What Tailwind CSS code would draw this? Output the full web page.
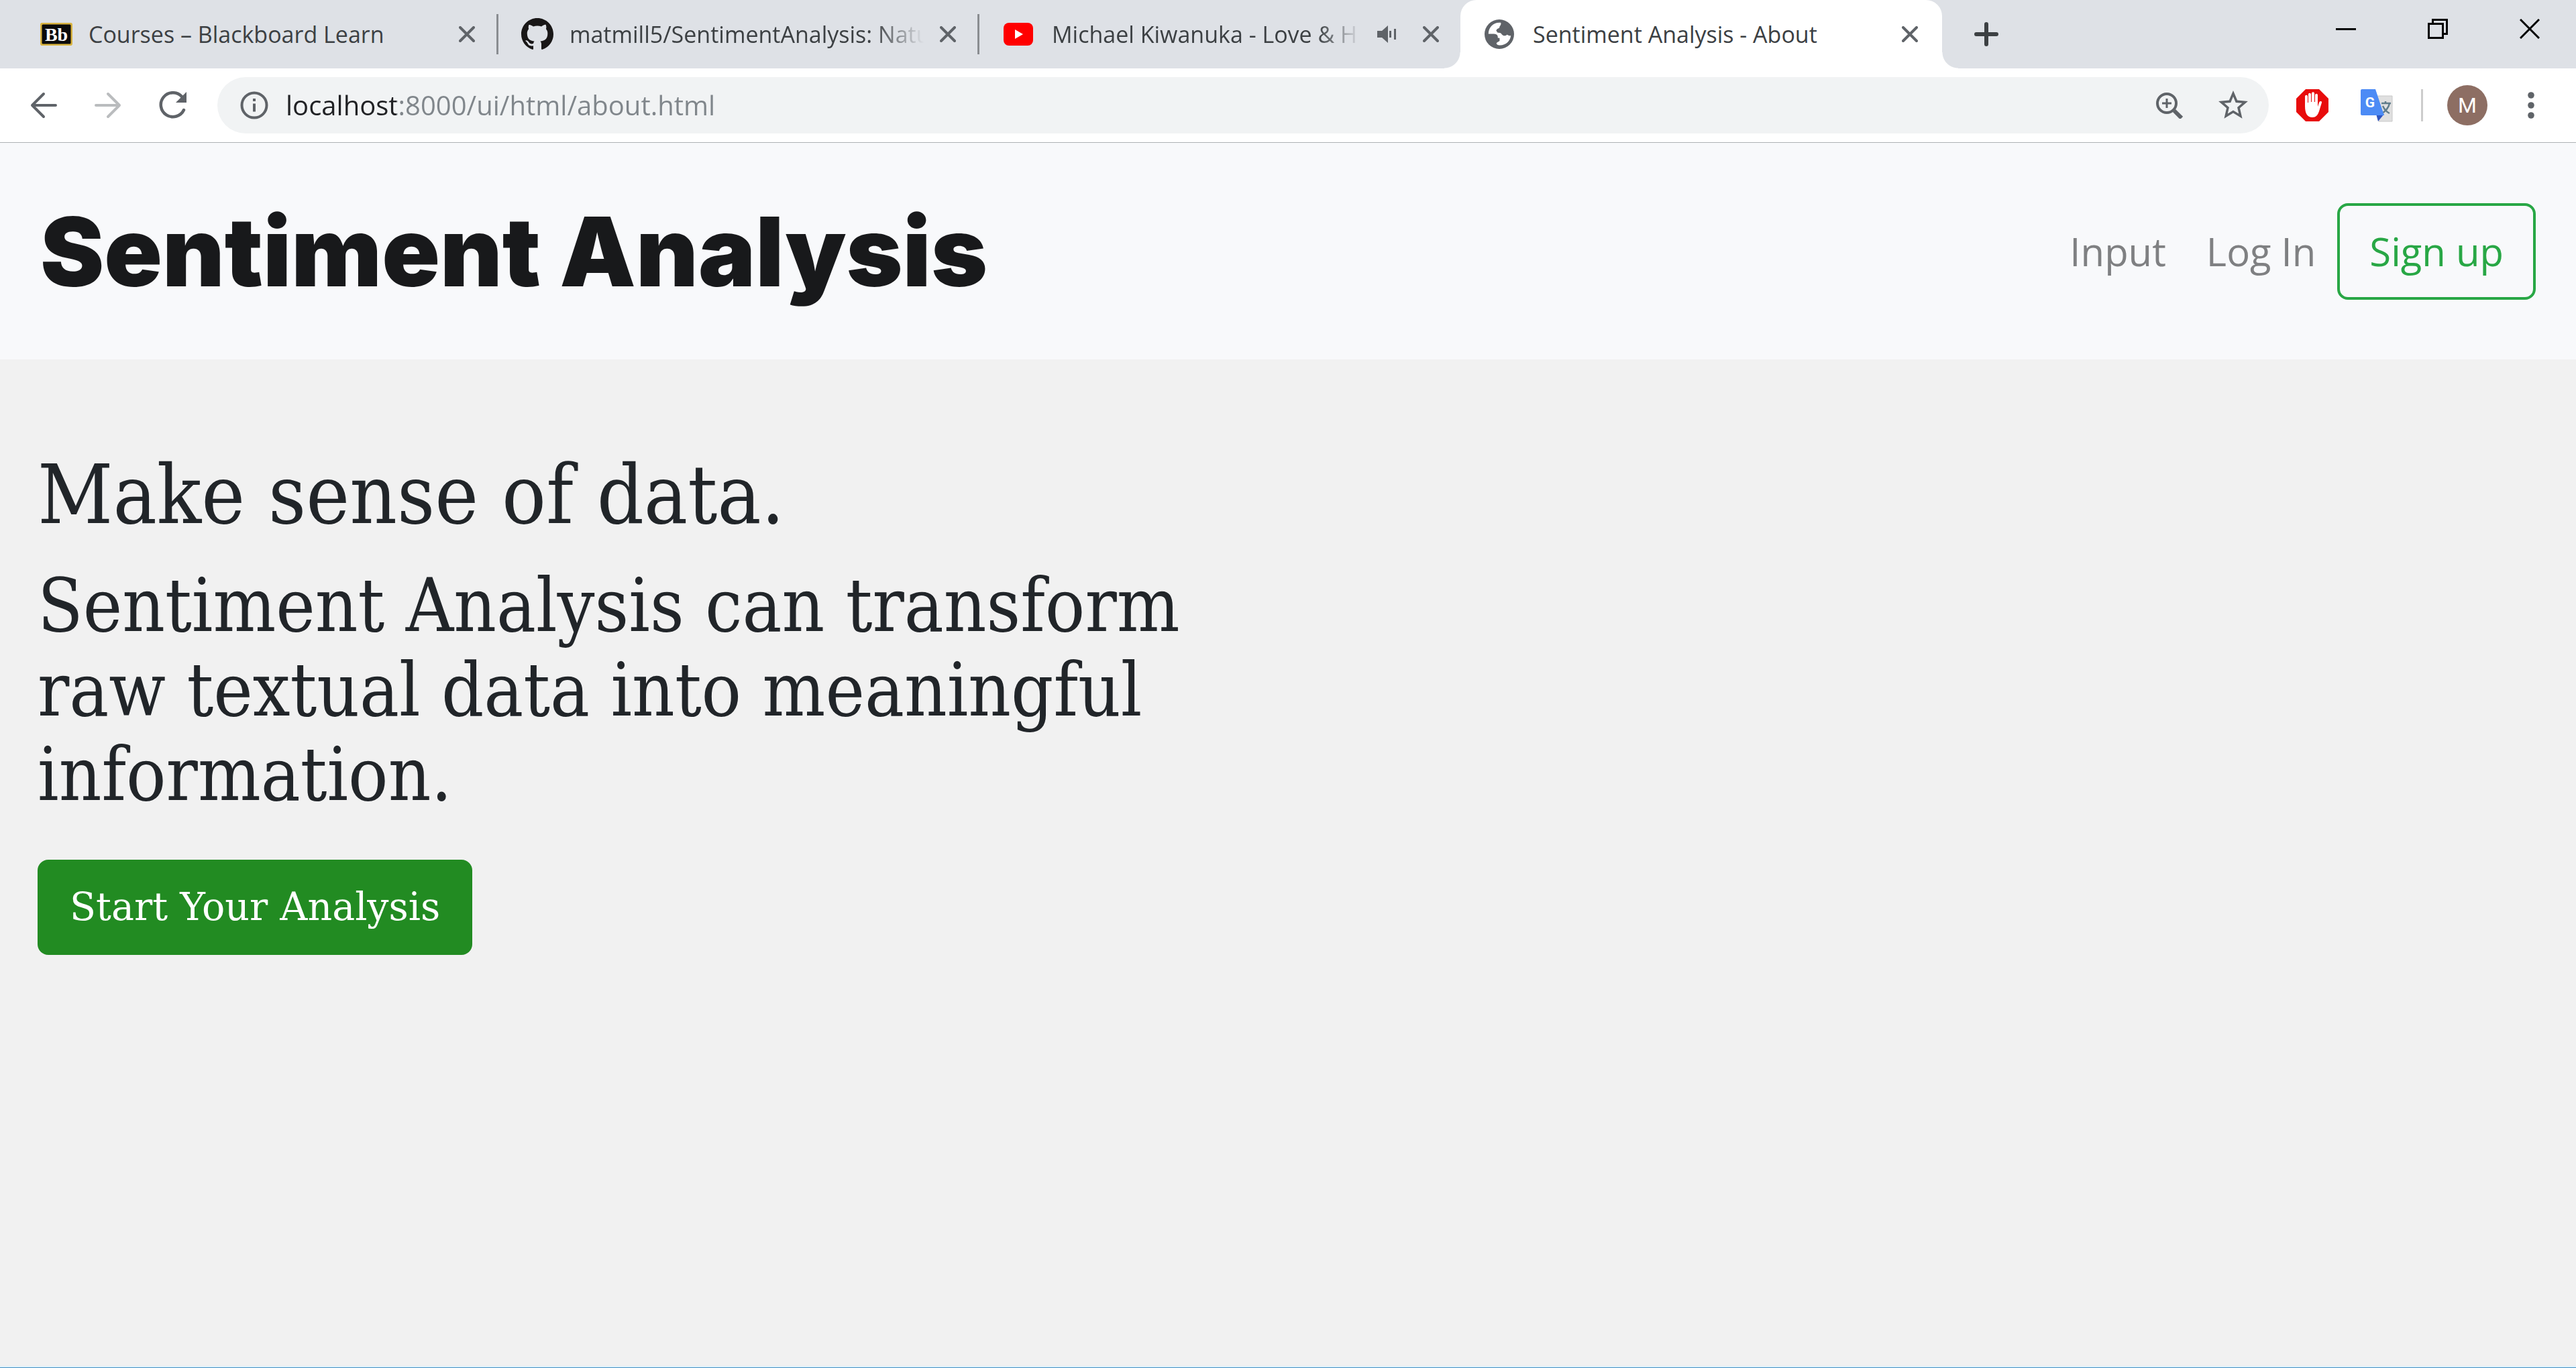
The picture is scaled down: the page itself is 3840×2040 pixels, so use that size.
<!DOCTYPE html>
<html lang="en">
<head>
<meta charset="utf-8">
<title>Sentiment Analysis - About</title>
<script src="https://cdn.jsdelivr.net/npm/@tailwindcss/browser@4"></script>
</head>
<body class="flex min-h-screen flex-col bg-[#f1f1f1] font-['Open_Sans','Noto_Sans',sans-serif] text-[#212529]">

<!-- Tab strip -->
<header class="flex h-[102px] items-center bg-[#dee1e6] pl-[26px] text-[34px] text-[#3c4043]">
  <div class="flex h-full w-[717px] min-w-0 items-center pl-[34px]">
    <svg class="h-[34px] w-12 shrink-0" viewBox="0 0 48 34"><rect x="1" y="1" width="46" height="32" rx="3" fill="#0a0a0a" stroke="#d9b441" stroke-width="3"/><text x="24" y="27" text-anchor="middle" font-family="Liberation Serif" font-weight="700" font-size="28" fill="#fff">Bb</text></svg>
    <span class="ml-6 min-w-0 flex-1 overflow-hidden whitespace-nowrap">Courses – Blackboard Learn</span>
    <button aria-label="Close tab" class="mr-8 text-[#5f6368]"><svg class="size-6" viewBox="0 0 24 24" fill="none" stroke="currentColor" stroke-width="4" stroke-linecap="round"><path d="M2 2 22 22M22 2 2 22"/></svg></button>
    <span class="h-[60px] w-[3px] bg-[#8a8d91]"></span>
  </div>
  <div class="flex h-full w-[717px] min-w-0 items-center pl-[34px]">
    <svg class="size-12 shrink-0" viewBox="0 0 16 16" fill="#191717"><path d="M8 0C3.58 0 0 3.58 0 8c0 3.54 2.29 6.53 5.47 7.59.4.07.55-.17.55-.38 0-.19-.01-.82-.01-1.49-2.01.37-2.53-.49-2.69-.94-.09-.23-.48-.94-.82-1.13-.28-.15-.68-.52-.01-.53.63-.01 1.08.58 1.23.82.72 1.21 1.87.87 2.33.66.07-.52.28-.87.51-1.07-1.78-.2-3.64-.89-3.64-3.95 0-.87.31-1.59.82-2.15-.08-.2-.36-1.02.08-2.12 0 0 .67-.21 2.2.82.64-.18 1.32-.27 2-.27s1.36.09 2 .27c1.53-1.04 2.2-.82 2.2-.82.44 1.1.16 1.92.08 2.12.51.56.82 1.27.82 2.15 0 3.07-1.87 3.75-3.65 3.95.29.25.54.73.54 1.48 0 1.07-.01 1.93-.01 2.2 0 .21.15.46.55.38A8.01 8.01 0 0 0 16 8c0-4.42-3.58-8-8-8z"/></svg>
    <span class="ml-6 min-w-0 flex-1 overflow-hidden whitespace-nowrap [mask-image:linear-gradient(to_right,black_86%,transparent)]">matmill5/SentimentAnalysis: Natu</span>
    <button aria-label="Close tab" class="mr-8 ml-6 text-[#5f6368]"><svg class="size-6" viewBox="0 0 24 24" fill="none" stroke="currentColor" stroke-width="4" stroke-linecap="round"><path d="M2 2 22 22M22 2 2 22"/></svg></button>
    <span class="h-[60px] w-[3px] bg-[#8a8d91]"></span>
  </div>
  <div class="flex h-full w-[717px] min-w-0 items-center pl-9">
    <svg class="h-[34px] w-11 shrink-0" viewBox="0 0 44 34"><rect width="44" height="34" rx="8" fill="#f00"/><path d="M17 10v14l12-7z" fill="#fff"/></svg>
    <span class="ml-7 min-w-0 flex-1 overflow-hidden whitespace-nowrap [mask-image:linear-gradient(to_right,black_86%,transparent)]">Michael Kiwanuka - Love &amp; H</span>
    <button aria-label="Mute tab" class="ml-6 text-[#5f6368]"><svg class="h-[26px] w-7" viewBox="0 0 28 26" fill="currentColor"><path d="M0 8h7l9-8v26l-9-8H0zM18 8h3v10h-3zM25 5h3v16h-3z"/></svg></button>
    <button aria-label="Close tab" class="mr-8 ml-10 text-[#5f6368]"><svg class="size-6" viewBox="0 0 24 24" fill="none" stroke="currentColor" stroke-width="4" stroke-linecap="round"><path d="M2 2 22 22M22 2 2 22"/></svg></button>
  </div>
  <div class="relative flex h-full w-[718px] min-w-0 items-center rounded-t-3xl bg-white pr-9 pl-9">
    <span class="absolute bottom-0 -left-6 size-6 bg-[radial-gradient(circle_at_top_left,#dee1e6_23px,white_24px)]"></span>
    <span class="absolute -right-6 bottom-0 size-6 bg-[radial-gradient(circle_at_top_right,#dee1e6_23px,white_24px)]"></span>
    <svg class="size-11 shrink-0" viewBox="2 2 20 20" fill="#5f6368"><circle cx="12" cy="12" r="10"/><path fill="#fff" d="M13 4.200c-4.600-.6-8.300 2.800-8.400 7.600h3.800c1.900.1 2.700.9 2.600 2.700l1.200.1v1.900c-.8.700-2 .8-2.200 1.800.2.800 1.200 1.300 2.500 1.200 4-.1 7-3 7.300-6.600-1 .3-1.600-.2-2.600-.6-1.200 1.100-2.600.9-3.400-.1-.6-1.100-1.600-1.300-2.900-1.200l-1-1.400c.3-1.600 1.700-1.300 2.200-2.200.1-1.200 1.400-1.500.9-3.200z"/></svg>
    <span class="ml-7 min-w-0 flex-1 overflow-hidden whitespace-nowrap">Sentiment Analysis - About</span>
    <button aria-label="Close tab" class="text-[#5f6368]"><svg class="size-6" viewBox="0 0 24 24" fill="none" stroke="currentColor" stroke-width="4" stroke-linecap="round"><path d="M2 2 22 22M22 2 2 22"/></svg></button>
  </div>
  <button aria-label="New tab" class="ml-12 text-[#3c4043]"><svg class="size-9" viewBox="0 0 36 36" fill="none" stroke="currentColor" stroke-width="6" stroke-linecap="round"><path d="M18 3v30M3 18h30"/></svg></button>
  <div class="mr-[54px] mb-4 ml-auto flex items-center gap-[107px] text-black">
    <button aria-label="Minimize"><svg class="size-[30px]" viewBox="0 0 30 30"><path d="M0 14h30v3H0z"/></svg></button>
    <button aria-label="Restore"><svg class="size-[30px]" viewBox="0 0 30 30" fill="none" stroke="currentColor" stroke-width="3"><path d="M1.500 7.500h21v21h-21zM7.500 7.500v-6h21v21h-6"/></svg></button>
    <button aria-label="Close window"><svg class="size-[30px]" viewBox="0 0 30 30" fill="none" stroke="currentColor" stroke-width="3"><path d="M1 1 29 29M29 1 1 29"/></svg></button>
  </div>
</header>

<!-- Toolbar -->
<div class="flex h-[111px] items-center border-b border-[#aeb1b4] bg-white pl-[45px] text-[#5f6368]">
  <button aria-label="Back"><svg class="size-10" viewBox="0 0 40 40" fill="none" stroke="currentColor" stroke-width="4" stroke-linecap="round" stroke-linejoin="round"><path d="M38 20H3M20 3 3 20l17 17"/></svg></button>
  <button aria-label="Forward" disabled class="ml-14 text-[#babcbe]"><svg class="size-10" viewBox="0 0 40 40" fill="none" stroke="currentColor" stroke-width="4" stroke-linecap="round" stroke-linejoin="round"><path d="M2 20h35M20 3l17 17-17 17"/></svg></button>
  <button aria-label="Reload" class="ml-14"><svg class="size-[42px]" viewBox="0 0 42 42"><path d="M37 28A18 18 0 1 1 34 8" fill="none" stroke="currentColor" stroke-width="4.500" stroke-linecap="round"/><path d="M41 1v16H25z" fill="currentColor"/></svg></button>
  <div class="ml-[45px] flex h-[84px] min-w-0 flex-1 items-center rounded-full bg-[#f1f3f4] pr-[30px] pl-[34px]">
    <svg class="size-[42px] shrink-0" viewBox="0 0 42 42" fill="none" stroke="currentColor" stroke-width="4"><circle cx="21" cy="21" r="18.500"/><path d="M21 18.500v12M21 11v4"/></svg>
    <input aria-label="Address" value="localhost:8000/ui/html/about.html" class="ml-[26px] min-w-0 flex-1 bg-[linear-gradient(to_right,#202124_165px,#80868b_165px)] bg-clip-text text-[40px] text-transparent outline-none">
    <button aria-label="Zoom"><svg class="size-10" viewBox="0 0 40 40" fill="none" stroke="currentColor"><circle cx="16" cy="17" r="14" stroke-width="4"/><path d="M16 10v14M9 17h14" stroke-width="3"/><path d="m27 28 11 11" stroke-width="6"/></svg></button>
    <button aria-label="Bookmark this page" class="ml-[52px]"><svg class="size-[46px]" viewBox="1.500 1.500 21 21" fill="currentColor"><path d="M22 9.240l-7.190-.62L12 2 9.190 8.630 2 9.240l5.460 4.730L5.820 21 12 17.270 18.180 21l-1.630-7.030L22 9.240zM12 15.400l-3.760 2.270 1-4.280-3.320-2.880 4.380-.38L12 6.100l1.710 4.040 4.380.38-3.320 2.880 1 4.280L12 15.400z"/></svg></button>
  </div>
  <button aria-label="AdBlock" class="ml-10"><svg class="size-[50px]" viewBox="0 0 50 50"><path d="M15 1h20l14 14v20L35 49H15L1 35V15z" fill="#e80c0c"/><path d="M14 26V12c0-3 4-3 4 0v9h1V9c0-3 4-3 4 0v11h1V7.500c0-3 4-3 4 0V20h1V10c0-3 4-3 4 0v17l2-6c1-3 5-2 4 0l-4 13c-2 6-5 9-10 9-7 0-11-5-11-17z" fill="#fff"/></svg></button>
  <button aria-label="Translate" class="ml-[46px]"><svg class="size-[50px]" viewBox="0 0 50 50"><path d="M20 11h28v38H28z" fill="#e0e0e0" stroke="#c8c8c8"/><path d="M32 22h14M38 19v3M44 22c-1 6-6 12-11 15M34 26c2 5 6 9 10 11" fill="none" stroke="#607d8b" stroke-width="2.500"/><path d="M24 38h12l-9 11z" fill="#3055c0"/><path d="M3 1h20l13 39H3q-2 0-2-2V3q0-2 2-2z" fill="#4c8bf5"/><text x="15" y="28" text-anchor="middle" font-family="Roboto" font-weight="700" font-size="21" fill="#fff">G</text></svg></button>
  <span class="ml-[41px] h-12 w-[3px] bg-[#ccc]"></span>
  <button aria-label="Profile" class="ml-9 size-[60px] rounded-full bg-[#8d6e63] font-['Roboto',sans-serif] text-[32px] text-white">M</button>
  <button aria-label="Menu" class="mr-[62px] ml-[60px]"><svg class="h-10 w-[10px]" viewBox="0 0 10 40" fill="currentColor"><circle cx="5" cy="5" r="4.800"/><circle cx="5" cy="20" r="4.800"/><circle cx="5" cy="35" r="4.800"/></svg></button>
</div>

<!-- Site navigation -->
<nav class="flex h-[323px] items-center justify-between bg-[#f8f9fb] px-[60px]">
  <a href="#" class="font-['Inter',sans-serif] text-[143px] leading-none font-black text-[#18191b]">Sentiment Analysis</a>
  <div class="flex items-center gap-[60px] text-[58px] text-[#7f8082]">
    <a href="#">Input</a>
    <a href="#">Log In</a>
    <button class="-ml-7 h-36 rounded-2xl border-4 border-[#28a745] px-11 text-[#28a745]">Sign up</button>
  </div>
</nav>

<!-- Introduction -->
<main class="w-1/2 flex-1 pt-[136px] pl-14 font-['DejaVu_Serif_Condensed','DejaVu_Serif',serif]">
  <h1 class="text-[122px] leading-[132px]">Make sense of data.</h1>
  <p class="mt-9 text-[110px] leading-[126px]">Sentiment Analysis can transform raw textual data into meaningful information.</p>
  <button class="mt-16 h-[142px] rounded-2xl bg-[#228b22] px-12 font-['DejaVu_Serif',serif] text-[57px] text-white">Start Your Analysis</button>
</main>
<div class="h-[3px] border-b border-[#4690c2] bg-[#ddf0fa]"></div>
</body>
</html>
